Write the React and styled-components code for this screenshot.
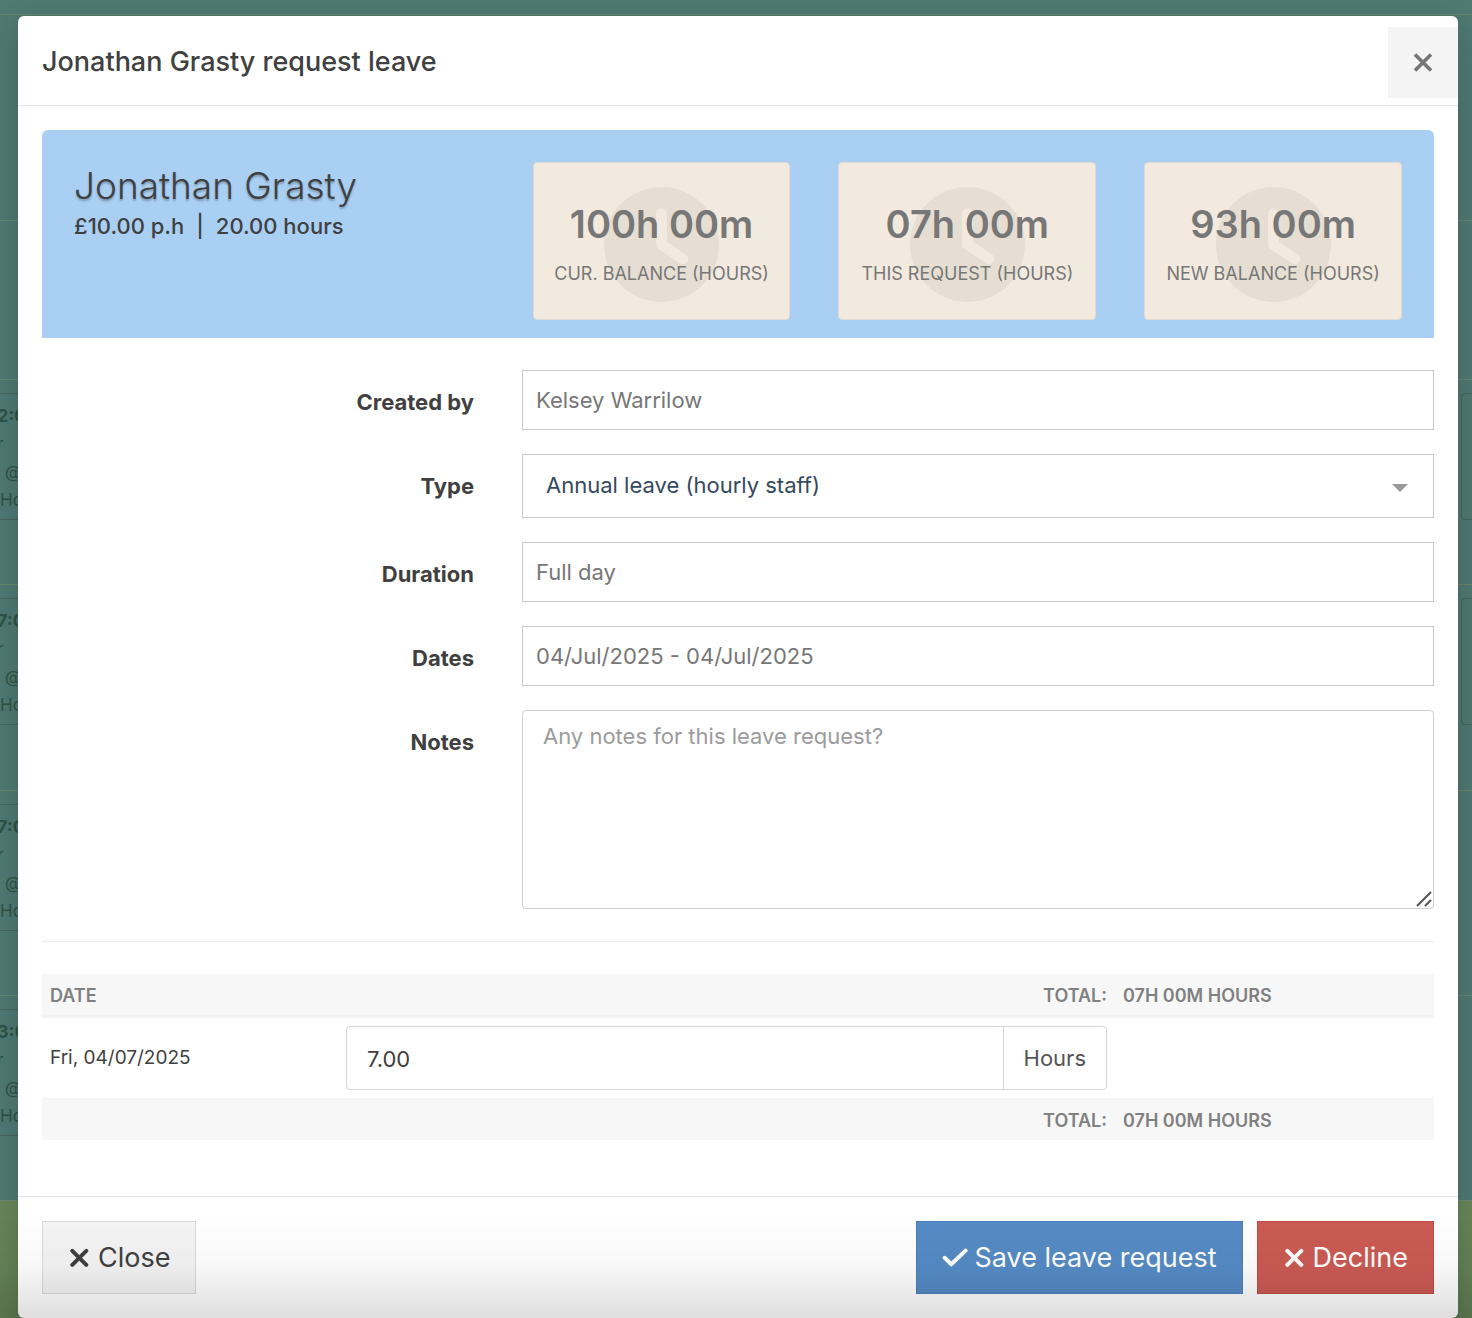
import React, { useState } from "react";
import styled, { createGlobalStyle } from "styled-components";
import { FaClock } from "react-icons/fa6";

const GlobalStyle = createGlobalStyle`
    * {
        box-sizing: border-box;
    }

    body {
        margin: 0;
        background: #67865a;
        color: #404040;
        font-family: Inter, "Liberation Sans", sans-serif;
        font-size: 22px;
        line-height: 28px;
    }

    button,
    input,
    select,
    textarea {
        font: inherit;
        color: inherit;
        margin: 0;
    }
`;

/* rota and modal share one cell, the modal lies on top */
const Page = styled.div`
    display: grid;
    grid-template-columns: minmax(0, 1fr);
    min-height: 100vh;
    overflow: hidden;

    &::after {
        content: "";
        position: fixed;
        z-index: 2;
        left: 0;
        right: 0;
        bottom: 0;
        height: 100px;
        background: linear-gradient(
            rgba(0, 0, 0, 0),
            rgba(0, 0, 0, 0.03) 50%,
            rgba(0, 0, 0, 0.13)
        );
        pointer-events: none;
    }
`;

const Rota = styled.div`
    grid-area: 1 / 1;
    align-self: start;
    padding-top: 14px;
    background: #4f7973;
    border-bottom: 1px solid #6a8a77;
    overflow: hidden;
`;

const RotaRow = styled.div`
    display: flex;
    justify-content: space-between;
    min-height: ${({ $height }) => $height}px;
    padding-top: 13px;
    border-top: 1px solid #6a8568;
`;

const Shift = styled.div`
    width: 120px;
    height: 127px;
    margin-left: -4px;
    padding-top: 8px;
    border: 1px solid #44645a;
    border-radius: 4px;
    color: #2f5346;
    font-size: 17px;
`;

const EmptyShift = styled(Shift)`
    margin-left: 0;
    margin-right: -109px;
`;

const ShiftLine = styled.div`
    padding-left: ${({ $indent }) => $indent || 0}px;
    font-size: ${({ $bold }) => ($bold ? 18 : 17)}px;
    font-weight: ${({ $bold }) => ($bold ? 700 : 400)};
`;

const Modal = styled.div`
    grid-area: 1 / 1;
    align-self: start;
    z-index: 1;
    margin: 16px 14px 0 18px;
    background: #ffffff;
    border-radius: 6px;
    box-shadow: 0 10px 30px rgba(0, 0, 0, 0.2);
`;

const ModalHeader = styled.div`
    display: flex;
    justify-content: space-between;
    align-items: center;
    padding: 11px 0 7px 24px;
    border-bottom: 1px solid #e4e4e4;
`;

const ModalTitle = styled.h1`
    margin: 0 0 1px;
    font-size: 27px;
    line-height: 32px;
    font-weight: 500;
`;

const CornerButton = styled.button`
    display: flex;
    justify-content: center;
    align-items: center;
    width: 70px;
    height: 71px;
    padding: 0;
    border: 0;
    background: #f4f4f4;
    color: #757575;
    cursor: pointer;
`;

const ModalBody = styled.div`
    padding: 24px 24px 56px;
`;

const Summary = styled.div`
    display: grid;
    grid-template-columns: repeat(9, minmax(0, 1fr));
    column-gap: 48px;
    padding: 32px 32px 18px;
    background: #a9cff3;
    border-radius: 6px 6px 0 0;
`;

const Person = styled.div`
    grid-column: span 3;
`;

const PersonName = styled.h2`
    margin: 0;
    font-size: 37px;
    line-height: 48px;
    font-weight: 300;
    white-space: nowrap;
    text-shadow: 0 2px 2px rgba(0, 0, 0, 0.25);
`;

const PersonInfo = styled.div`
    display: flex;
    gap: 12px;
    line-height: 32px;
    font-weight: 500;
`;

const StatCard = styled.div`
    grid-column: span 2;
    position: relative;
    height: 158px;
    padding-top: 37px;
    background: #f3eadf;
    border: 1px solid #e0dbd4;
    border-radius: 4px;
    color: #777777;
    text-align: center;
    white-space: nowrap;
`;

const StatIcon = styled(FaClock)`
    position: absolute;
    inset: 6px 0 0;
    margin: auto;
    width: 115px;
    height: 115px;
    color: #e6ded3;
`;

const StatValue = styled.div`
    position: relative;
    font-size: 38px;
    line-height: 48px;
    font-weight: 600;
`;

const StatLabel = styled.div`
    position: relative;
    padding-top: 12px;
    font-size: 18px;
`;

const Form = styled.div`
    display: grid;
    gap: 24px;
    padding-top: 32px;
`;

const FormRow = styled.div`
    display: grid;
    grid-template-columns: repeat(12, minmax(0, 1fr));
    column-gap: 48px;
`;

const FormLabel = styled.label`
    grid-column: span 4;
    padding-top: 18px;
    text-align: right;
    font-weight: 700;
`;

const Field = styled.div`
    grid-column: span 8;
    position: relative;
    display: grid;
`;

const TextInput = styled.input`
    width: 100%;
    height: 60px;
    padding: 0 13px;
    background: #ffffff;
    border: 1px solid #c9c9c9;
    border-radius: 0;
    color: #777777;
`;

const Select = styled.select`
    width: 100%;
    height: 64px;
    padding: 0 60px 2px 23px;
    appearance: none;
    background: #ffffff;
    border: 1px solid #c9c9c9;
    border-radius: 0;
    color: #34495e;
`;

const Caret = styled.svg`
    position: absolute;
    right: 26px;
    top: 30px;
    pointer-events: none;
`;

const TextArea = styled.textarea`
    display: block;
    width: 100%;
    height: 199px;
    padding: 11px 20px;
    border: 1px solid #d0d0d0;
    border-radius: 4px;
    resize: vertical;

    &::placeholder {
        color: #9b9b9b;
    }

    &::-webkit-resizer {
        display: none;
    }
`;

const Grip = styled.svg`
    position: absolute;
    right: 2px;
    bottom: 2px;
    pointer-events: none;
`;

const Divider = styled.hr`
    margin: 32px 0;
    border: 0;
    border-top: 1px solid #eeeeee;
`;

const HoursTable = styled.table`
    width: 100%;
    table-layout: fixed;
    border-collapse: separate;
    border-spacing: 0;
    color: #404040;
    font-size: 19px;

    th,
    td {
        padding: 8px;
        text-align: left;
    }
`;

const DateCol = styled.col`
    width: 296px;
`;

const TotalCol = styled.col`
    width: 319px;
`;

const TotalsRow = styled.tr`
    background: #f7f7f7;

    th {
        height: 42px;
        padding: 2px 8px 0;
        color: #808080;
        font-size: 18px;
        line-height: 24px;
        font-weight: 600;
    }

    th:nth-child(2) {
        text-align: right;
    }

    thead & th {
        height: 44px;
        border-bottom: 3px solid #f3f3f3;
    }

    tfoot & th {
        border-top: 1px solid #f3f3f3;
    }
`;

const InputGroup = styled.div`
    display: flex;
    height: 64px;
    border: 1px solid #d3d3df;
    border-radius: 4px;
    font-size: 22px;
`;

const HoursInput = styled.input`
    flex: 1;
    min-width: 0;
    padding: 2px 20px 0;
    background: none;
    border: 0;
`;

const Addon = styled.span`
    display: flex;
    align-items: center;
    padding: 0 20px;
    border-left: 1px solid #d3d3df;
    color: #555555;
`;

const ModalFooter = styled.div`
    display: flex;
    gap: 14px;
    padding: 24px;
    border-top: 1px solid #e4e4e4;
`;

const Button = styled.button`
    display: flex;
    align-items: center;
    gap: 6px;
    height: 73px;
    padding: 0 25px;
    background: ${({ $bg }) => $bg};
    border: 1px solid ${({ $line }) => $line};
    color: ${({ $color }) => $color || "#ffffff"};
    font-size: 27px;
    white-space: nowrap;
    cursor: pointer;

    &:first-child {
        margin-right: auto;
    }
`;

const ButtonIcon = styled.svg`
    flex: none;
    fill: none;
    stroke: currentColor;
    stroke-width: 4px;
    stroke-linecap: round;
    stroke-linejoin: round;
`;

const CrossIcon = () => (
    <ButtonIcon width="24" height="20" viewBox="0 0 24 20">
        <path d="M4.3 2.8L18.3 16.8M18.3 2.8L4.3 16.8" />
    </ButtonIcon>
);

const CheckIcon = () => (
    <ButtonIcon width="26" height="20" viewBox="0 0 26 20">
        <path d="M2.6 9.8L9.3 16.3L23.6 2.6" />
    </ButtonIcon>
);

const rota = [
    { height: 206 },
    { height: 159 },
    { height: 205, time: "2:0" },
    { height: 206, time: "7:0" },
    { height: 205, time: "7:0" },
    { height: 205, time: "3:0" },
];

const stats = [
    { value: "100h 00m", label: "CUR. BALANCE (HOURS)" },
    { value: "07h 00m", label: "THIS REQUEST (HOURS)" },
    { value: "93h 00m", label: "NEW BALANCE (HOURS)" },
];

const RotaBoard = () => (
    <Rota>
        {rota.map(({ height, time }, i) => (
            <RotaRow key={i} $height={height}>
                {time && (
                    <Shift>
                        <ShiftLine $bold>{time}</ShiftLine>
                        <ShiftLine>r</ShiftLine>
                        <ShiftLine $indent={8}>@</ShiftLine>
                        <ShiftLine $indent={3}>Ho</ShiftLine>
                    </Shift>
                )}
                {(i === 2 || i === 3) && <EmptyShift />}
            </RotaRow>
        ))}
    </Rota>
);

const App = () => {
    const [hours, setHours] = useState("7.00");
    const [notes, setNotes] = useState("");

    return (
        <Page>
            <GlobalStyle />
            <RotaBoard />
            <Modal role="dialog" aria-labelledby="title">
                <ModalHeader>
                    <ModalTitle id="title">Jonathan Grasty request leave</ModalTitle>
                    <CornerButton type="button" aria-label="Close">
                        <svg width="20" height="20" viewBox="0 0 20 20">
                            <path
                                d="M2 1.5L18 17.5M18 1.5L2 17.5"
                                stroke="currentColor"
                                strokeWidth="3.6"
                            />
                        </svg>
                    </CornerButton>
                </ModalHeader>
                <ModalBody>
                    <Summary>
                        <Person>
                            <PersonName>Jonathan Grasty</PersonName>
                            <PersonInfo>
                                <span>£10.00 p.h</span>
                                <span>|</span>
                                <span>20.00 hours</span>
                            </PersonInfo>
                        </Person>
                        {stats.map(({ value, label }) => (
                            <StatCard key={label}>
                                <StatIcon />
                                <StatValue>{value}</StatValue>
                                <StatLabel>{label}</StatLabel>
                            </StatCard>
                        ))}
                    </Summary>
                    <Form>
                        <FormRow>
                            <FormLabel htmlFor="createdBy">Created by</FormLabel>
                            <Field>
                                <TextInput id="createdBy" readOnly value="Kelsey Warrilow" />
                            </Field>
                        </FormRow>
                        <FormRow>
                            <FormLabel htmlFor="type">Type</FormLabel>
                            <Field>
                                <Select id="type">
                                    <option>Annual leave (hourly staff)</option>
                                </Select>
                                <Caret width="16" height="8" viewBox="0 0 16 8">
                                    <path d="M0 0H16L8 8Z" fill="#999999" />
                                </Caret>
                            </Field>
                        </FormRow>
                        <FormRow>
                            <FormLabel htmlFor="duration">Duration</FormLabel>
                            <Field>
                                <TextInput id="duration" readOnly value="Full day" />
                            </Field>
                        </FormRow>
                        <FormRow>
                            <FormLabel htmlFor="dates">Dates</FormLabel>
                            <Field>
                                <TextInput
                                    id="dates"
                                    readOnly
                                    value="04/Jul/2025 - 04/Jul/2025"
                                />
                            </Field>
                        </FormRow>
                        <FormRow>
                            <FormLabel htmlFor="notes">Notes</FormLabel>
                            <Field>
                                <TextArea
                                    id="notes"
                                    placeholder="Any notes for this leave request?"
                                    value={notes}
                                    onChange={(e) => setNotes(e.target.value)}
                                />
                                <Grip width="16" height="16" viewBox="0 0 16 16">
                                    <path
                                        d="M1 15L15 1M9 15L15 9"
                                        stroke="#555555"
                                        strokeWidth="2"
                                    />
                                </Grip>
                            </Field>
                        </FormRow>
                    </Form>
                    <Divider />
                    <HoursTable>
                        <colgroup>
                            <DateCol />
                            <col />
                            <TotalCol />
                        </colgroup>
                        <thead>
                            <TotalsRow>
                                <th>DATE</th>
                                <th>TOTAL:</th>
                                <th>07H 00M HOURS</th>
                            </TotalsRow>
                        </thead>
                        <tbody>
                            <tr>
                                <td>
                                    <label htmlFor="hours">Fri, 04/07/2025</label>
                                </td>
                                <td>
                                    <InputGroup>
                                        <HoursInput
                                            id="hours"
                                            value={hours}
                                            onChange={(e) => setHours(e.target.value)}
                                        />
                                        <Addon>Hours</Addon>
                                    </InputGroup>
                                </td>
                                <td />
                            </tr>
                        </tbody>
                        <tfoot>
                            <TotalsRow>
                                <th />
                                <th>TOTAL:</th>
                                <th>07H 00M HOURS</th>
                            </TotalsRow>
                        </tfoot>
                    </HoursTable>
                </ModalBody>
                <ModalFooter>
                    <Button type="button" $bg="#f4f4f4" $line="#dadada" $color="#404040">
                        <CrossIcon />
                        Close
                    </Button>
                    <Button type="button" $bg="#558bc5" $line="#4a7fba">
                        <CheckIcon />
                        Save leave request
                    </Button>
                    <Button type="button" $bg="#cb5b54" $line="#bf4c45">
                        <CrossIcon />
                        Decline
                    </Button>
                </ModalFooter>
            </Modal>
        </Page>
    );
};

export default App;
